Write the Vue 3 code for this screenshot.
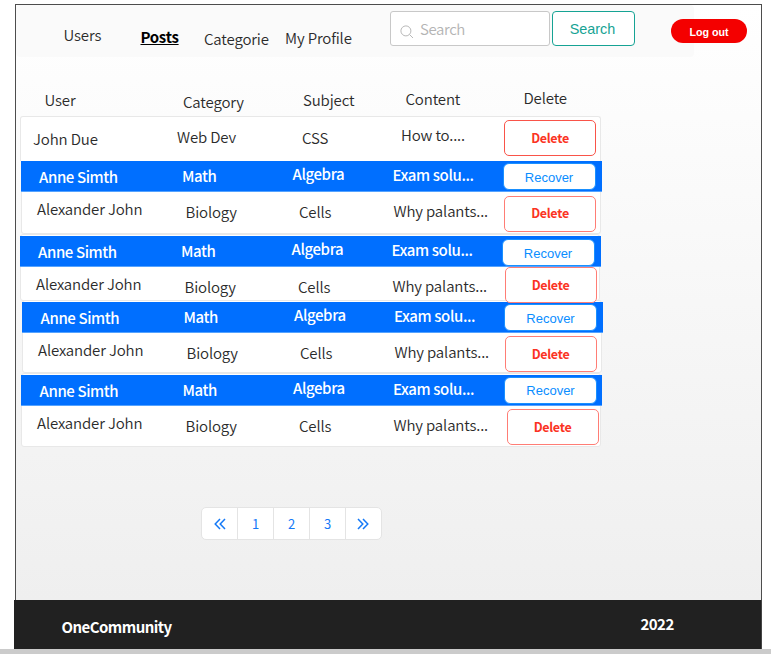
<script setup>
const columns = ['User', 'Category', 'Subject', 'Content', 'Delete']
const groups = [1, 2, 3, 4]
const pages = ['1', '2', '3']
</script>

<template>
  <div class="screen">
    <div class="frame">
      <header class="topbar">
        <nav class="nav">
          <a class="users">Users</a>
          <a class="posts">Posts</a>
          <a class="categories">Categorie</a>
          <a class="profile">My Profile</a>
        </nav>
        <div class="field">
          <svg class="glass" width="14" height="14" viewBox="0 0 14 14">
            <circle cx="5.9" cy="5.9" r="5" />
            <path d="M9.5 9.5 L13 13" />
          </svg>
          <span>Search</span>
        </div>
        <button class="search">Search</button>
        <button class="logout">Log out</button>
      </header>

      <main class="content">
        <div class="headings">
          <span v-for="c in columns" :key="c">{{ c }}</span>
        </div>
        <div class="row first">
          <span>John Due</span>
          <span>Web Dev</span>
          <span>CSS</span>
          <span>How to....</span>
          <button class="delete">Delete</button>
        </div>
        <section v-for="g in groups" :key="g" class="group" :class="'g' + g">
          <div class="row band">
            <span>Anne Simth</span>
            <span>Math</span>
            <span>Algebra</span>
            <span>Exam solu...</span>
            <button class="recover">Recover</button>
          </div>
          <div class="row plain">
            <span>Alexander John</span>
            <span>Biology</span>
            <span>Cells</span>
            <span>Why palants...</span>
            <button class="delete">Delete</button>
          </div>
        </section>
        <div class="pager">
          <span><svg width="12" height="12" viewBox="0 0 12 12"><path d="M6 1 L1.2 6 L6 11 M11 1 L6.2 6 L11 11" /></svg></span>
          <span v-for="p in pages" :key="p">{{ p }}</span>
          <span><svg width="12" height="12" viewBox="0 0 12 12"><path d="M1 1 L5.8 6 L1 11 M6 1 L10.8 6 L6 11" /></svg></span>
        </div>
      </main>
    </div>
    <footer class="footer">
      <span class="brand">OneCommunity</span>
      <span class="year">2022</span>
    </footer>
    <div class="strip"></div>
  </div>
</template>

<style>
body { margin: 0; background: #fff; overflow: hidden; }
</style>

<style scoped>
* { box-sizing: border-box; }
.screen {
  width: 771px; height: 654px; padding-top: 4px; overflow: hidden;
  display: flex; flex-direction: column;
  font-family: "Noto Sans CJK SC", "Noto Sans", sans-serif;
  font-size: 15px; font-weight: 350; letter-spacing: -.15px; line-height: 20px; color: #2b2b2b; white-space: nowrap;
}
button { font: inherit; padding: 0; margin: 0; display: block; }
.frame {
  width: 747px; height: 596px; margin-left: 15px; flex: none;
  border: 1px solid #4d4d4d; border-bottom: 0;
  background: linear-gradient(#fff, #efefef);
  display: flex; flex-direction: column;
}
.topbar { display: flex; align-items: flex-start; height: 52px; width: 678px; background: #fafafa; border-radius: 4px; flex: none; }
.nav { display: flex; width: 374px; flex: none; }
.nav a { flex: none; }
.users { width: 77px; margin: 20px 0 0 47.5px; }
.posts { width: 63.5px; margin-top: 22px; font-weight: 700; color: #000; letter-spacing: -.3px; text-decoration: underline; text-underline-offset: 1px; text-decoration-thickness: 1px; }
.categories { width: 81px; margin-top: 24px; }
.profile { margin-top: 23px; }
.field {
  width: 160px; height: 35px; margin-top: 6px; flex: none; border: 1px solid #c8c8c8; border-radius: 3px;
  background: #fff; display: flex; color: #b4b4b4;
}
.field span { margin: 7px 0 0 6px; letter-spacing: -.4px; }
.glass { margin: 13px 0 0 9px; fill: none; stroke: #b8b8b8; stroke-width: 1; }
.search {
  width: 83px; height: 35px; margin: 6px 0 0 2px; flex: none; border: 1px solid #16a394; border-radius: 4px;
  background: #fff; color: #16a394; font: 14.4px "Liberation Sans", sans-serif; letter-spacing: 0; padding-right: 2px;
}
.logout {
  width: 76px; height: 24px; margin: 14px 0 0 36px; flex: none; border: 0; border-radius: 12px;
  background: #f40000; color: #fff; font: bold 10.7px "Liberation Sans", sans-serif; letter-spacing: 0; padding-top: 2px;
}
.content { padding-left: 4px; }
.headings { display: grid; grid-template-columns: 138.5px 120px 102.5px 118px 60px; padding-left: 24.5px; height: 59px; padding-top: 32px; }
.headings span:nth-child(1) { margin-top: 1px; }
.headings span:nth-child(2) { margin-top: 3px; }
.headings span:nth-child(3) { margin-top: 1px; }
.headings span:nth-child(5) { margin-top: -1px; }

.row { display: grid; align-items: start; }
.first {
  width: 581px; height: 45px; background: #fff; border: 1px solid #e8e8e8; border-bottom: 0;
  border-radius: 3px 3px 0 0; grid-template-columns: 144px 125px 99px 103px 92px; padding-left: 12px;
}
.first span:nth-child(1) { margin-top: 12px; }
.first span:nth-child(2) { margin-top: 10px; }
.first span:nth-child(3) { margin-top: 11px; }
.first span:nth-child(4) { margin-top: 8px; }
.first .delete { margin-top: 3px; border-color: #f95449; }
.group { width: 580px; background: #fff; border: 1px solid #e8e8e8; border-radius: 3px; }
.g1 { height: 73px; margin-left: 1px; border-top: 0; border-radius: 0 0 3px 3px; }
.g2 { height: 67px; }
.g3 { height: 73px; margin-left: 2px; margin-top: -1px; }
.g4 { height: 74px; margin-left: 1px; }
.band {
  width: 581px; height: 31px; margin: 1px 0 0 -1px; background: #006fff; border-bottom: 1px solid #55a3ff;
  color: #fff; font-weight: 500; letter-spacing: -.4px; grid-template-columns: 143px 110.5px 100px 110px 93px; padding-left: 18px;
}
.g1 .band { margin-top: 0; }
.g3 .band, .g4 .band { padding-left: 18.5px; }
.band span:nth-child(1) { margin-top: 6px; }
.band span:nth-child(2) { margin-top: 5px; }
.band span:nth-child(3) { margin-top: 3px; }
.band span:nth-child(4) { margin-top: 4px; }
.recover {
  width: 93px; height: 27px; margin-top: 2px; border: 1px solid #1a90ff; border-radius: 6px; background: #fff;
  color: #0a8dff; font: 13px "Liberation Sans", sans-serif; letter-spacing: 0; padding-top: 1px;
}
.g2 .recover { margin-top: 3px; }
.g4 .recover { margin-left: 1px; padding-top: 0; }
.plain { grid-template-columns: 148.5px 113.5px 94.5px 111px 92px; padding-left: 15px; }
.plain span:nth-child(1) { margin-top: 7px; }
.plain span:nth-child(2) { margin-top: 10px; }
.plain span:nth-child(3) { margin-top: 10px; }
.plain span:nth-child(4) { margin-top: 9px; }
.delete {
  width: 92px; height: 36px; margin-top: 4px; border: 1px solid #ff7d75; border-radius: 5px; background: #fff;
  color: #fb3323; font-size: 12.5px; font-weight: 700; letter-spacing: -.3px;
}
.g1 .delete { margin-left: -.5px; padding-bottom: 2px; }
.g2 .delete { position: relative; z-index: 1; margin: 0 0 0 1px; }
.g3 .delete { margin-top: 3px; margin-left: -1px; }
.g4 .delete { margin-top: 3px; margin-left: 2px; }
.pager { display: grid; grid-template-columns: 35px 36px 36px 36px 36px; width: 181px; height: 33px; margin: 60px 0 0 181px; background: #fff; border: 1px solid #e4e4e4; border-radius: 5px; color: #1479f7; font-size: 13px; font-weight: 400; }
.pager span { display: flex; align-items: center; justify-content: center; }
.pager span:first-child { padding-left: 1px; }
.pager span:last-child { padding-right: 2px; }
.pager span + span { border-left: 1px solid #e4e4e4; }
.pager svg { fill: none; stroke: #1479f7; stroke-width: 1.5; }
.footer { height: 49px; width: 748px; margin-left: 14px; flex: none; display: flex; background: #212121; color: #fff; font-weight: 700; letter-spacing: -.55px; border-right: 1px solid #444; }
.brand { width: 579px; margin: 17px 0 0 47.5px; }
.year { margin-top: 14px; }
.strip { height: 5px; flex: none; background: #cbcbcb; }
</style>
